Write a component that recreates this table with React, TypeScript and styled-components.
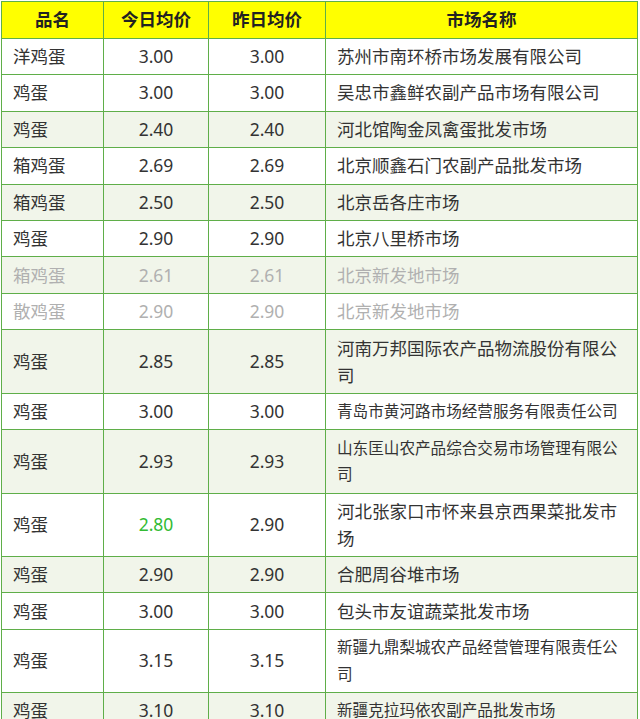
import React from "react";
import styled, { createGlobalStyle } from "styled-components";

const Global = createGlobalStyle`
  html, body { margin: 0; padding: 0; background: #ffffff; }
  body { font-family: "Noto Sans", "Noto Sans CJK SC", sans-serif; }
`;

const Table = styled.table`
  margin: 1px 0 0 1px;
  width: 636px;
  border-collapse: collapse;
  table-layout: fixed;
  font-size: 17.5px;
  color: #333333;
`;

const HeadCell = styled.th`
  background: #ffff00;
  border: 1px solid #5fae49;
  padding: 4.4px 11px;
  line-height: 26.8px;
  font-weight: 700;
  color: #222222;
  text-align: center;
`;

const Row = styled.tr<{ $alt?: boolean; $muted?: boolean }>`
  background: ${(p) => (p.$alt ? "#f1f5ea" : "#ffffff")};
  color: ${(p) => (p.$muted ? "#b0b0b0" : "#333333")};
`;

const Cell = styled.td<{ $center?: boolean; $small?: boolean; $up?: boolean }>`
  border: 1px solid #5fae49;
  padding: 4.35px 11px;
  line-height: 26.8px;
  text-align: ${(p) => (p.$center ? "center" : "left")};
  font-size: ${(p) => (p.$small ? "15.6px" : "17.5px")};
  color: ${(p) => (p.$up ? "#33bb33" : "inherit")};
  vertical-align: middle;
  word-break: break-all;
`;

type Item = {
  name: string;
  today: string;
  yest: string;
  market: string;
  alt?: boolean;
  muted?: boolean;
  small?: boolean;
  down?: boolean;
};

const rows: Item[] = [
  { name: "洋鸡蛋", today: "3.00", yest: "3.00", market: "苏州市南环桥市场发展有限公司" },
  { name: "鸡蛋", today: "3.00", yest: "3.00", market: "吴忠市鑫鲜农副产品市场有限公司" },
  { name: "鸡蛋", today: "2.40", yest: "2.40", market: "河北馆陶金凤禽蛋批发市场", alt: true },
  { name: "箱鸡蛋", today: "2.69", yest: "2.69", market: "北京顺鑫石门农副产品批发市场" },
  { name: "箱鸡蛋", today: "2.50", yest: "2.50", market: "北京岳各庄市场", alt: true },
  { name: "鸡蛋", today: "2.90", yest: "2.90", market: "北京八里桥市场" },
  { name: "箱鸡蛋", today: "2.61", yest: "2.61", market: "北京新发地市场", alt: true, muted: true },
  { name: "散鸡蛋", today: "2.90", yest: "2.90", market: "北京新发地市场", muted: true },
  { name: "鸡蛋", today: "2.85", yest: "2.85", market: "河南万邦国际农产品物流股份有限公司", alt: true },
  { name: "鸡蛋", today: "3.00", yest: "3.00", market: "青岛市黄河路市场经营服务有限责任公司", small: true },
  { name: "鸡蛋", today: "2.93", yest: "2.93", market: "山东匡山农产品综合交易市场管理有限公司", alt: true, small: true },
  { name: "鸡蛋", today: "2.80", yest: "2.90", market: "河北张家口市怀来县京西果菜批发市场", down: true },
  { name: "鸡蛋", today: "2.90", yest: "2.90", market: "合肥周谷堆市场", alt: true },
  { name: "鸡蛋", today: "3.00", yest: "3.00", market: "包头市友谊蔬菜批发市场" },
  { name: "鸡蛋", today: "3.15", yest: "3.15", market: "新疆九鼎梨城农产品经营管理有限责任公司", small: true },
  { name: "鸡蛋", today: "3.10", yest: "3.10", market: "新疆克拉玛依农副产品批发市场", alt: true, small: true },
];

export default function App() {
  return (
    <>
      <Global />
      <Table>
        <colgroup>
          <col style={{ width: 102 }} />
          <col style={{ width: 105 }} />
          <col style={{ width: 117 }} />
          <col style={{ width: 312 }} />
        </colgroup>
        <thead>
          <tr>
            <HeadCell>品名</HeadCell>
            <HeadCell>今日均价</HeadCell>
            <HeadCell>昨日均价</HeadCell>
            <HeadCell>市场名称</HeadCell>
          </tr>
        </thead>
        <tbody>
          {rows.map((r, i) => (
            <Row key={i} $alt={r.alt} $muted={r.muted}>
              <Cell>{r.name}</Cell>
              <Cell $center $up={r.down}>{r.today}</Cell>
              <Cell $center>{r.yest}</Cell>
              <Cell $small={r.small}>{r.market}</Cell>
            </Row>
          ))}
        </tbody>
      </Table>
    </>
  );
}
